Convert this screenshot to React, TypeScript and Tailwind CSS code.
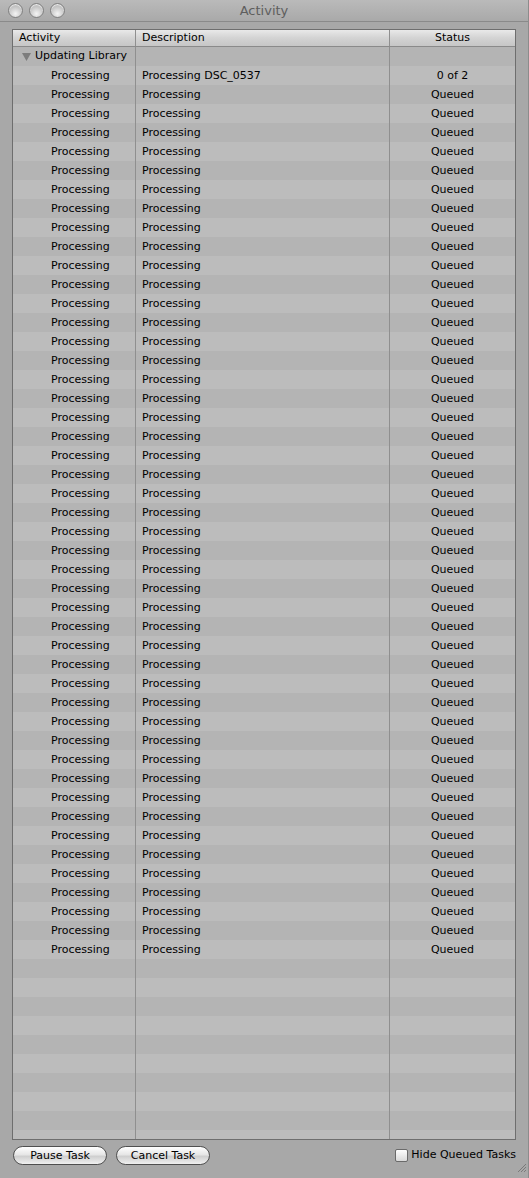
const ROWS = Array.from({ length: 47 }, (_, i) => ({
  activity: "Processing",
  description: i === 0 ? "Processing DSC_0537" : "Processing",
  status: i === 0 ? "0 of 2" : "Queued",
}));

const EMPTY_ROWS = 11;

function Light() {
  return (
    <span className="w-[15px] h-[15px] rounded-full border border-[#808080] bg-[radial-gradient(circle_at_50%_75%,#f4f4f4,#c8c8c8_55%,#a8a8a8)] shadow-[inset_0_1px_1px_rgba(255,255,255,0.8)]" />
  );
}

function Row({ index, children }: { index: number; children?: React.ReactNode }) {
  return (
    <div
      className={`grid grid-cols-[123px_254px_1fr] h-[19px] shrink-0 ${
        index % 2 === 0 ? "bg-[#b4b4b4]" : "bg-[#bcbcbc]"
      }`}
    >
      {children ?? (
        <>
          <div className="border-r border-[#8f8f8f]" />
          <div className="border-r border-[#8f8f8f]" />
          <div />
        </>
      )}
    </div>
  );
}

export default function App() {
  return (
    <div
      className="w-[529px] h-[1178px] bg-[#a8a8a8] flex flex-col text-[11px] text-black overflow-hidden border-r border-[#8c8c8c]"
      style={{ fontFamily: '"DejaVu Sans", "Liberation Sans", sans-serif' }}
    >
      <div className="relative h-[22px] shrink-0 bg-[linear-gradient(#bababa,#a9a9a9)] border-b border-[#8a8a8a] flex items-center justify-center">
        <div className="absolute left-[8px] top-[3px] flex gap-[6px]">
          <Light />
          <Light />
          <Light />
        </div>
        <span className="text-[13px] text-[#5e5e5e] leading-none">Activity</span>
      </div>

      <div className="flex-1 flex flex-col px-[12px] pt-[7px]">
        <div className="h-[1111px] border border-[#6e6e6e] flex flex-col overflow-hidden bg-[#b4b4b4]">
          <div className="grid grid-cols-[123px_254px_1fr] h-[17px] shrink-0 bg-[linear-gradient(#e9e9e9,#d3d3d3_50%,#c6c6c6)] border-b border-[#8a8a8a]">
            <div className="border-r border-[#8f8f8f] pl-[6px] leading-[16px]">Activity</div>
            <div className="border-r border-[#8f8f8f] pl-[6px] leading-[16px]">Description</div>
            <div className="text-center leading-[16px]">Status</div>
          </div>

          <Row index={0}>
            <div className="border-r border-[#8f8f8f] flex items-center pl-[9px] gap-[4px]">
              <svg width="9" height="8" viewBox="0 0 9 8">
                <path d="M0 0 H9 L4.5 8 Z" fill="#7c7c7c" />
              </svg>
              <span>Updating Library</span>
            </div>
            <div className="border-r border-[#8f8f8f]" />
            <div />
          </Row>

          {ROWS.map((r, i) => (
            <Row key={i} index={i + 1}>
              <div className="border-r border-[#8f8f8f] pl-[38px] leading-[19px]">{r.activity}</div>
              <div className="border-r border-[#8f8f8f] pl-[6px] leading-[19px]">{r.description}</div>
              <div className="text-center leading-[19px]">{r.status}</div>
            </Row>
          ))}

          {Array.from({ length: EMPTY_ROWS }, (_, i) => (
            <Row key={`e${i}`} index={ROWS.length + 1 + i} />
          ))}
        </div>

        <div className="relative flex items-center h-[31px] pl-[1px]">
          <div className="flex gap-[9px]">
            <button className="w-[94px] h-[19px] rounded-full border border-[#4f4f4f] bg-[linear-gradient(#ffffff,#e6e6e6_45%,#cfcfcf_55%,#f0f0f0)] text-[11px] leading-[17px]">
              Pause Task
            </button>
            <button className="w-[94px] h-[19px] rounded-full border border-[#4f4f4f] bg-[linear-gradient(#ffffff,#e6e6e6_45%,#cfcfcf_55%,#f0f0f0)] text-[11px] leading-[17px]">
              Cancel Task
            </button>
          </div>
          <label className="ml-auto flex items-center gap-[3px]">
            <span className="w-[13px] h-[13px] border border-[#6a6a6a] rounded-[2px] bg-[linear-gradient(#fdfdfd,#d9d9d9)]" />
            <span>Hide Queued Tasks</span>
          </label>
          <svg className="absolute right-[-11px] bottom-[-2px]" width="11" height="11" viewBox="0 0 11 11">
            <path d="M10 2 L2 10 M10 5 L5 10 M10 8 L8 10" stroke="#7a7a7a" strokeWidth="1" />
          </svg>
        </div>
      </div>
    </div>
  );
}
